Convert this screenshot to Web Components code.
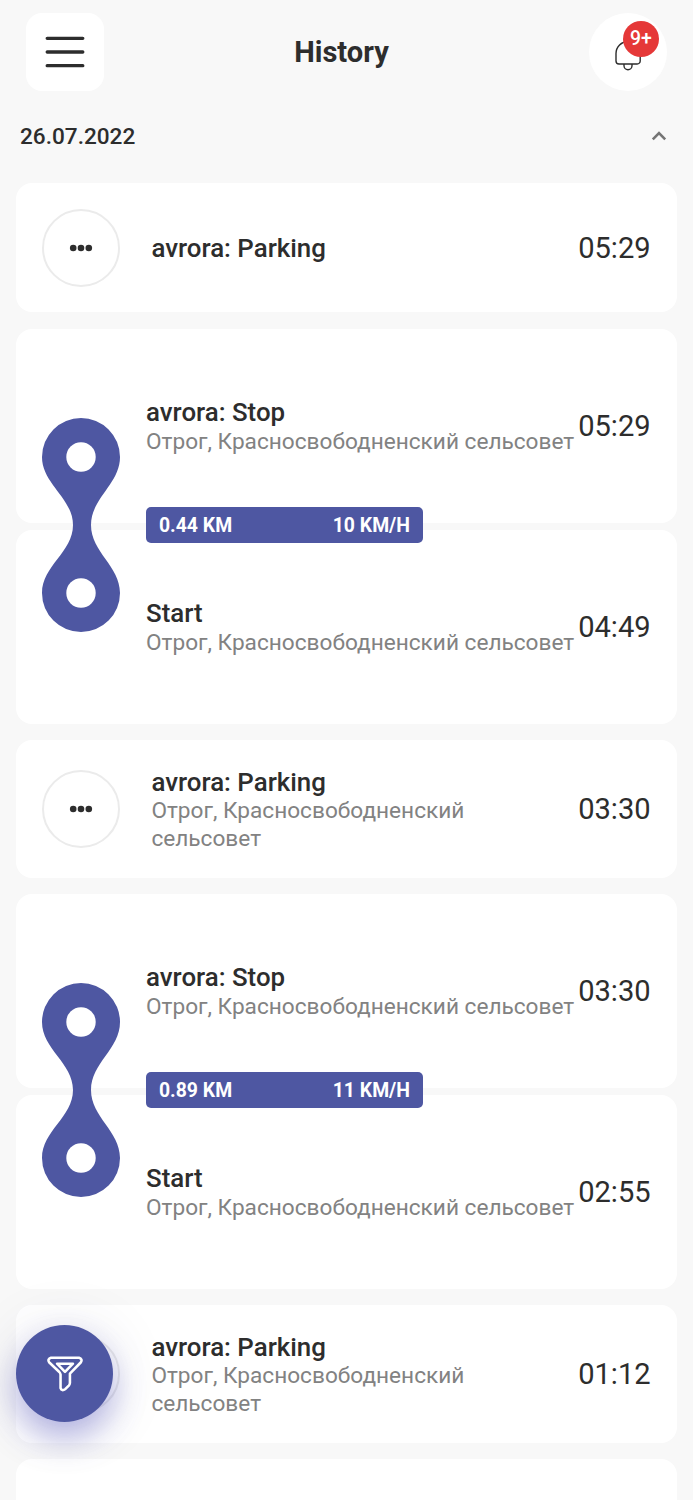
<!DOCTYPE html>
<html lang="en">
<head>
<meta charset="utf-8">
<title>History</title>
<style>
html,body{margin:0;height:100%;overflow:hidden;background:#f8f8f8}
body{font-family:Roboto,"Liberation Sans",sans-serif;color:#2d2d2d}
</style>
</head>
<body>
<history-screen></history-screen>
<script>
const define = (name, html) => {
  const t = document.createElement('template');
  t.innerHTML = html;
  customElements.define(name, class extends HTMLElement {
    constructor() {
      super();
      this.attachShadow({mode: 'open'}).append(t.content.cloneNode(true));
    }
  });
};

define('menu-button', `<style>
:host{display:grid;place-items:center;width:78px;height:78px;border-radius:16px;background:#fff}
svg{display:block}
</style><svg width="40" height="32" viewBox="0 0 40 32" fill="none" stroke="#2d2d2d" stroke-width="3.3" stroke-linecap="round"><path d="M2.2 2.3H37.8M2.2 16H37.8M2.2 29.7H37.8"/></svg>`);

define('bell-button', `<style>
:host{display:grid;place-items:center;position:relative;width:78px;height:78px;border-radius:50%;background:#fff}
svg{display:block}
span{position:absolute;left:34px;top:8.4px;width:36px;height:36px;border-radius:50%;background:#e53838;color:#fff;font-size:19.4px;font-weight:500;line-height:36.4px;text-align:center}
</style><svg width="78" height="78" viewBox="0 0 78 78" fill="none" stroke="#2d2d2d" stroke-width="1.4"><path d="M27 48V40.600a12.100 12.100 0 0 1 24.200 0v7.400a3 3 0 0 1-3 3H30a3 3 0 0 1-3-3Z"/><path d="M35 51v1.7a4 4 0 0 0 8 0V51"/></svg><span><slot></slot></span>`);

define('top-bar', `<style>
:host{display:flex;align-items:center;justify-content:space-between;padding:13px 26px 0;height:78px}
h1{margin:0;padding-right:10px;font-size:29.1px;line-height:34px;font-weight:700}
</style><menu-button></menu-button><h1><slot></slot></h1><slot name="end"></slot>`);

define('day-header', `<style>
:host{display:flex;align-items:center;justify-content:space-between;box-sizing:border-box;height:92px;padding:0 26px 2px 20px;font-size:22.6px;font-weight:500}
svg{display:block}
</style><span><slot></slot></span><svg width="16" height="10" viewBox="0 0 16 10" fill="none" stroke="#757575" stroke-width="2.6"><path d="M1.8 8.3 8 2.1l6.2 6.2"/></svg>`);

define('event-card', `<style>
:host{display:flex;align-items:center;box-sizing:border-box;height:var(--h,129.4px);padding:0 26px;border-radius:16px;background:#fff}
.lead{flex:none;width:var(--lead,109px)}
.text{flex:1;min-width:0;padding-top:1px;padding-right:var(--gap,12px)}
.title{font-size:25.87px;line-height:30.6px;font-weight:500}
.addr{font-size:22.64px;line-height:27.5px;color:#828282;white-space:var(--wrap,normal)}
.time{flex:none;font-size:29.1px;line-height:34px}
</style><div class="lead"><slot name="lead"></slot></div><div class="text"><div class="title"><slot></slot></div><div class="addr"><slot name="addr"></slot></div></div><div class="time"><slot name="time"></slot></div>`);

define('more-dot', `<style>
:host{display:grid;place-items:center;box-sizing:border-box;width:78px;height:78px;border:2px solid #ebebeb;border-radius:50%}
svg{display:block}
</style><svg width="24" height="8" viewBox="0 0 24 8" fill="#2d2d2d"><circle cx="4.2" cy="4" r="3.3"/><circle cx="12" cy="4" r="3.3"/><circle cx="19.8" cy="4" r="3.3"/></svg>`);

define('parking-event', `<style>
:host{display:block}
event-card{--h:var(--height,129.4px)}
</style><event-card><more-dot slot="lead"></more-dot><slot></slot><span slot="addr"><slot name="addr"></slot></span><span slot="time"><slot name="time"></slot></span></event-card>`);

define('route-pin', `<style>:host{display:block;width:78px;height:214px}svg{display:block}</style>
<svg width="78" height="214" viewBox="0 0 78 214"><path fill="#4e57a2" d="M0 39a39 39 0 0 1 78 0C78 66 49 80 49 107S78 148 78 175a39 39 0 0 1-78 0C0 148 31 134 31 107S0 66 0 39Z"/><circle cx="39" cy="39" r="14.7" fill="#fff"/><circle cx="39" cy="175" r="14.7" fill="#fff"/></svg>`);

define('speed-bar', `<style>
:host{display:flex;justify-content:space-between;align-items:center;box-sizing:border-box;width:277px;height:36px;padding:0 13.2px 0 12.8px;border-radius:5px;background:#4e57a2;color:#fff;font-size:19.4px;font-weight:700}
</style><slot></slot>`);

define('trip-event', `<style>
:host{display:grid;row-gap:6.6px;position:relative}
event-card{--h:194.2px;--lead:103.6px;--gap:0px;--wrap:nowrap}
.link{position:absolute;left:25.8px;top:-1px;height:100%;display:flex;align-items:center;gap:26px}
</style><event-card><slot name="stop"></slot><span slot="addr"><slot name="stop-addr"></slot></span><span slot="time"><slot name="stop-time"></slot></span></event-card>
<event-card><slot name="start"></slot><span slot="addr"><slot name="start-addr"></slot></span><span slot="time"><slot name="start-time"></slot></span></event-card>
<div class="link"><route-pin></route-pin><speed-bar><span><slot name="km"></slot></span><span><slot name="speed"></slot></span></speed-bar></div>`);

define('filter-button', `<style>
:host{display:grid;place-items:center;position:absolute;left:16.3px;bottom:78px;width:97px;height:97px;border-radius:50%;background:#4e57a2;box-shadow:0 16px 32px rgba(78,78,190,.4),0 4px 64px rgba(60,60,100,.11)}
svg{display:block}
</style><svg width="36" height="36" viewBox="0 0 38 38" fill="none" stroke="#fff" stroke-width="2.7" stroke-linejoin="round"><path d="M4.2 1.9H33.8Q37.8 3 35.8 6.6L24.2 18.500V28.5Q24.1 30 23 31.2L19.5 34.800Q15.5 37.600 14.300 34V19.5Q14 18 13 16.9L2.2 6.6Q.2 3 4.2 1.9Z"/><path d="M10.600 8.1H27.400L19 16.800Z"/></svg>`);

const ADDR = 'Отрог, Красносвободненский сельсовет';
const parking = (time, addr, cls = '') => `<parking-event class="${cls}">avrora: Parking${addr ? `<span slot="addr">${ADDR}</span>` : ''}<span slot="time">${time}</span></parking-event>`;
const trip = (stop, start, km, speed) => `<trip-event><span slot="stop">avrora: Stop</span><span slot="stop-addr">${ADDR}</span><span slot="stop-time">${stop}</span><span slot="start">Start</span><span slot="start-addr">${ADDR}</span><span slot="start-time">${start}</span><span slot="km">${km}</span><span slot="speed">${speed}</span></trip-event>`;

define('history-screen', `<style>
:host{display:block;position:relative;height:1500px;overflow:hidden;background:#f8f8f8}
main{display:grid;row-gap:16.4px;padding:0 16.4px}
.tall{--height:137.4px}
</style><top-bar>History<bell-button slot="end">9+</bell-button></top-bar>
<day-header>26.07.2022</day-header>
<main>${parking('05:29', false)}${trip('05:29', '04:49', '0.44 KM', '10 KM/H')}${parking('03:30', true, 'tall')}${trip('03:30', '02:55', '0.89 KM', '11 KM/H')}${parking('01:12', true, 'tall')}<event-card></event-card></main>
<filter-button></filter-button>`);
</script>
</body>
</html>
